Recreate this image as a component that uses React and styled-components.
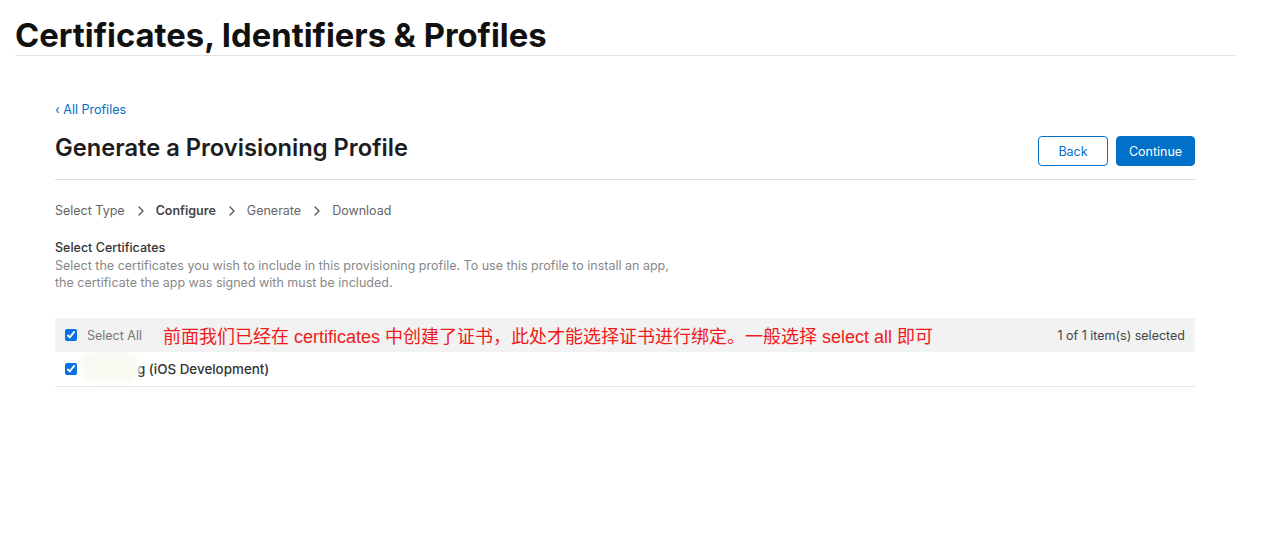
import React from 'react';
import styled, { createGlobalStyle } from 'styled-components';

const GlobalStyle = createGlobalStyle`
  body {
    margin: 0;
    background: #ffffff;
    font-family: Inter, 'Noto Sans', 'Noto Sans CJK SC', sans-serif;
    color: #1d1d1f;
  }
`;

const Page = styled.div`
  width: 1268px;
  height: 557px;
  overflow: hidden;
`;

const TopHeader = styled.header`
  margin: 0 33px 0 15px;
  padding-top: 15px;
  border-bottom: 1px solid #e3e3e3;
`;

const SiteTitle = styled.h1`
  margin: 0;
  font-size: 32.8px;
  line-height: 40px;
  font-weight: 700;
  color: #111;
`;

const Main = styled.main`
  width: 1140px;
  margin: 0 0 0 55px;
  padding-top: 42px;
`;

const BackLink = styled.a`
  display: inline-block;
  font-size: 12.5px;
  line-height: 18px;
  color: #0070c9;
  text-decoration: none;
`;

const TitleBar = styled.div`
  display: flex;
  align-items: center;
  justify-content: space-between;
  margin-top: 9px;
  padding-bottom: 13px;
  border-bottom: 1px solid #dcdcdc;
`;

const PageTitle = styled.h2`
  margin: 2px 0 0;
  font-size: 23.7px;
  line-height: 32px;
  font-weight: 600;
  color: #1d1d1f;
`;

const Actions = styled.div`
  display: flex;
  gap: 8px;
  margin-top: 8px;
`;

const Button = styled.button`
  height: 30px;
  width: ${(p) => (p.primary ? '79px' : '70px')};
  border-radius: 4px;
  font-family: inherit;
  font-size: 12.5px;
  border: 1px solid #0070c9;
  background: ${(p) => (p.primary ? '#0070c9' : '#ffffff')};
  color: ${(p) => (p.primary ? '#ffffff' : '#0070c9')};
  cursor: pointer;
`;

const Steps = styled.ol`
  display: flex;
  align-items: center;
  list-style: none;
  margin: 0;
  padding: 22px 0 0;
  font-size: 12.5px;
  line-height: 18px;
  color: #666;
`;

const Step = styled.li`
  font-weight: ${(p) => (p.active ? 600 : 400)};
  color: ${(p) => (p.active ? '#444' : '#666')};
`;

const Chevron = styled.li`
  margin: 0 12px 0 13px;
  display: flex;
  align-items: center;
`;

const Section = styled.section`
  margin-top: 19px;
`;

const SectionTitle = styled.h3`
  margin: 0;
  font-size: 12.5px;
  line-height: 17px;
  font-weight: 500;
  color: #333;
`;

const SectionText = styled.p`
  margin: 1px 0 0;
  width: 625px;
  font-size: 12.5px;
  line-height: 17px;
  color: #888;
`;

const Table = styled.div`
  margin-top: 27px;
`;

const HeadRow = styled.div`
  display: flex;
  align-items: center;
  height: 34px;
  padding: 0 10px;
  background: #f2f2f2;
`;

const Row = styled.div`
  display: flex;
  align-items: center;
  height: 34px;
  padding: 0 10px;
  border-bottom: 1px solid #e5e5e5;
`;

const Check = styled.input.attrs({ type: 'checkbox' })`
  margin: 0 10px 0 0;
  width: 12px;
  height: 12px;
  accent-color: #0a6fe6;
`;

const HeadLabel = styled.span`
  font-size: 12.5px;
  color: #777;
`;

const Note = styled.span`
  margin-left: 21px;
  font-size: 18px;
  color: #f01a1a;
  font-family: 'Liberation Sans', 'Noto Sans CJK SC', sans-serif;
`;

const Count = styled.span`
  margin-left: auto;
  font-size: 12.5px;
  color: #444;
`;

const CertName = styled.span`
  position: relative;
  font-size: 13.4px;
  font-weight: 500;
  color: #333;
`;

const Hidden = styled.span`
  display: inline-block;
  width: 50px;
`;

const Blur = styled.span`
  position: absolute;
  left: -7px;
  top: -9px;
  width: 60px;
  height: 30px;
  border-radius: 14px;
  background: #fafaf3;
  filter: blur(2px);
`;

const ChevronIcon = () => (
  <svg width="6" height="10" viewBox="0 0 6 10" fill="none">
    <path d="M1 1l4 4-4 4" stroke="#555" strokeWidth="1.3" strokeLinecap="round" strokeLinejoin="round" />
  </svg>
);

const App = () => {
  const steps = ['Select Type', 'Configure', 'Generate', 'Download'];
  return (
    <Page>
      <GlobalStyle />
      <TopHeader>
        <SiteTitle>Certificates, Identifiers &amp; Profiles</SiteTitle>
      </TopHeader>
      <Main>
        <BackLink href="#">‹ All Profiles</BackLink>
        <TitleBar>
          <PageTitle>Generate a Provisioning Profile</PageTitle>
          <Actions>
            <Button>Back</Button>
            <Button primary>Continue</Button>
          </Actions>
        </TitleBar>
        <Steps>
          {steps.map((s, i) => (
            <React.Fragment key={s}>
              {i > 0 && (
                <Chevron>
                  <ChevronIcon />
                </Chevron>
              )}
              <Step active={s === 'Configure'}>{s}</Step>
            </React.Fragment>
          ))}
        </Steps>
        <Section>
          <SectionTitle>Select Certificates</SectionTitle>
          <SectionText>
            Select the certificates you wish to include in this provisioning profile. To use this profile to install an app,
            the certificate the app was signed with must be included.
          </SectionText>
        </Section>
        <Table>
          <HeadRow>
            <Check defaultChecked />
            <HeadLabel>Select All</HeadLabel>
            <Note>前面我们已经在 certificates 中创建了证书，此处才能选择证书进行绑定。一般选择 select all 即可</Note>
            <Count>1 of 1 item(s) selected</Count>
          </HeadRow>
          <Row>
            <Check defaultChecked />
            <CertName>
              <Hidden />g (iOS Development)
              <Blur />
            </CertName>
          </Row>
        </Table>
      </Main>
    </Page>
  );
};

export default App;
